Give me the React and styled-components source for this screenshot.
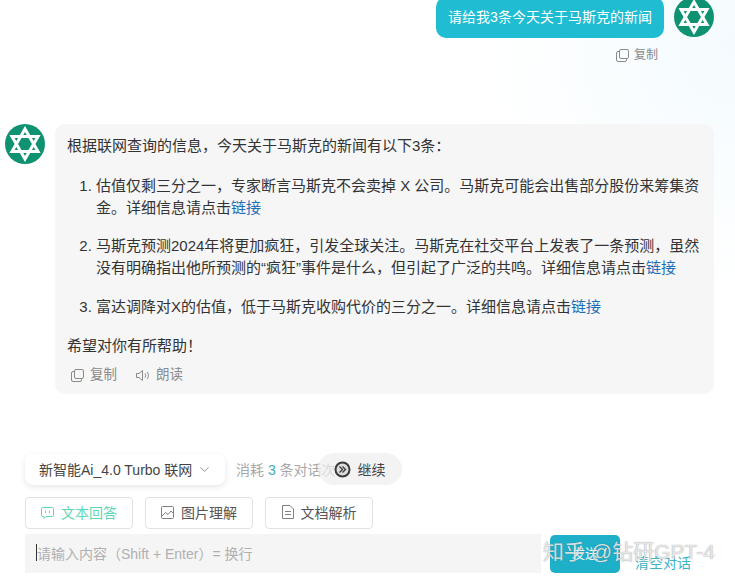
import React from "react";
import styled, { createGlobalStyle } from "styled-components";
import { ChevronDown } from "lucide-react";

const GlobalStyle = createGlobalStyle`
	html, body {
		margin: 0;
		padding: 0;
		background: #ffffff;
	}
	body {
		font-family: "Liberation Sans", "Noto Sans CJK SC", sans-serif;
		color: #333333;
	}
	* {
		box-sizing: border-box;
	}
`;

const Page = styled.div`
	position: relative;
	width: 735px;
	height: 583px;
	overflow: hidden;
	background: radial-gradient(circle at 100% 8%, #f4fbfe 0, #ffffff 260px);
`;

const Chat = styled.div`
	height: 449px;
	margin-top: -3px;
	display: flex;
	flex-direction: column;
`;

const UserRow = styled.div`
	display: flex;
	justify-content: flex-end;
	gap: 10px;
	padding-right: 21px;
`;

const UserBubble = styled.div`
	width: 228px;
	height: 41px;
	background: #1fbcd2;
	border-radius: 10px;
	color: #ffffff;
	font-size: 14px;
	line-height: 41px;
	text-align: center;
`;

const UserCopy = styled.div`
	display: flex;
	justify-content: flex-end;
	padding: 8px 77px 0 0;
`;

const AssistantRow = styled.div`
	display: flex;
	gap: 10px;
	margin-top: 60px;
	padding: 0 21px 0 5px;
`;

const AssistantBubble = styled.div`
	width: 659px;
	height: 270px;
	padding: 11px 12px 10px;
	background: #f6f6f7;
	border-radius: 10px;
	font-size: 15px;
	line-height: 22px;
`;

const Paragraph = styled.p`
	margin: 0;
`;

const NewsList = styled.ol`
	margin: 18px 0 17px;
	padding: 0 0 0 29px;
`;

const NewsItem = styled.li`
	margin-bottom: 17px;
	&:first-child {
		margin-bottom: 16px;
	}
	&:last-child {
		margin-bottom: 0;
	}
`;

const NewsLink = styled.a`
	color: #1c6fb5;
`;

const Actions = styled.div`
	display: flex;
	gap: 19px;
	margin-top: 9px;
	padding-left: 4px;
`;

const Action = styled.span`
	display: inline-flex;
	align-items: center;
	gap: ${({ $small }) => ($small ? "5px" : "6px")};
	font-size: ${({ $small }) => ($small ? "12px" : "13.5px")};
	line-height: 18px;
	color: #8a8a8a;
`;

const Composer = styled.div`
	padding-left: 25px;
`;

const ModelRow = styled.div`
	display: flex;
	align-items: center;
	height: 32px;
	margin-top: 7px;
`;

const ModelSelect = styled.div`
	display: flex;
	align-items: center;
	justify-content: space-between;
	width: 200px;
	height: 31px;
	padding: 0 13px 0 14px;
	background: #ffffff;
	border-radius: 8px;
	box-shadow: 0 2px 6px rgba(0, 0, 0, 0.1);
	font-size: 14px;
	color: #444444;
	white-space: nowrap;
`;

const Usage = styled.span`
	position: relative;
	z-index: 1;
	margin-left: 11px;
	font-size: 14px;
	color: #a8a8a8;
	white-space: nowrap;
`;

const UsageCount = styled.b`
	font-weight: 400;
	color: #3fa9bd;
`;

const ContinuePill = styled.div`
	position: relative;
	z-index: 2;
	display: flex;
	align-items: center;
	gap: 7px;
	width: 84px;
	height: 32px;
	margin-left: -18px;
	padding-left: 16px;
	border-radius: 16px;
	background: rgba(238, 238, 240, 0.7);
	font-size: 14px;
	color: #444444;
`;

const ContinueIcon = styled.svg`
	width: 17px;
	height: 17px;
	flex: none;
`;

const ModeRow = styled.div`
	display: flex;
	gap: 12px;
	margin-top: 12px;
`;

const ModeButton = styled.div`
	display: flex;
	align-items: center;
	justify-content: center;
	gap: 7px;
	width: 108px;
	height: 32px;
	padding-bottom: 2px;
	border: 1px solid #e2e2e2;
	border-radius: 4px;
	background: #ffffff;
	font-size: 14px;
	color: ${({ $active }) => ($active ? "#5fd6b4" : "#555555")};
	svg {
		color: ${({ $active }) => ($active ? "#5fd6b4" : "#808080")};
	}
`;

const InputRow = styled.div`
	display: flex;
	align-items: center;
	gap: 9px;
	margin-top: 5px;
`;

const Input = styled.div`
	display: flex;
	align-items: center;
	width: 516px;
	height: 39px;
	padding: 0 0 2px 11px;
	background: #f5f5f5;
	font-size: 14px;
	color: #b0b0b0;
`;

const Caret = styled.span`
	width: 1px;
	height: 17px;
	background: #333333;
`;

const SendButton = styled.div`
	width: 70px;
	height: 38px;
	border-radius: 5px;
	background: #1fb0c9;
	color: #ffffff;
	font-size: 13px;
	line-height: 38px;
	text-align: center;
`;

const ClearLink = styled.span`
	align-self: flex-end;
	margin: 0 0 1px 6px;
	font-size: 14px;
	line-height: 18px;
	color: #3fb3c6;
`;

const Watermark = styled.div`
	position: absolute;
	left: 543px;
	top: 537px;
	font-size: 21px;
	line-height: 30px;
	color: rgba(255, 255, 255, 0.8);
	text-shadow: 0 0 1px rgba(70, 70, 70, 0.7);
	white-space: nowrap;
`;

const StarAvatar = () => (
	<svg width="40" height="40" viewBox="0 0 40 40" style={{ flex: "none" }}>
		<circle cx="20" cy="20" r="20" fill="#0f9272" />
		<g fill="none" stroke="#ffffff" strokeWidth="3">
			<polygon points="20,5 33,27.5 7,27.5" />
			<polygon points="20,35 33,12.5 7,12.5" />
		</g>
	</svg>
);

const CopyIcon = () => (
	<svg width="13" height="13" viewBox="0 0 13 13" fill="none" stroke="#8a8a8a" strokeWidth="1">
		<rect x="3.5" y="0.5" width="9" height="9" rx="1.5" />
		<path d="M3.5 2.5H2A1.5 1.5 0 0 0 .5 4v7A1.5 1.5 0 0 0 2 12.5h7A1.5 1.5 0 0 0 10.5 11V9.5" />
	</svg>
);

const SpeakerIcon = () => (
	<svg width="14" height="13" viewBox="0 0 14 13" fill="none" stroke="#8a8a8a" strokeWidth="1">
		<path d="M.5 4.5h2.5L6.5 1.5v10L3 8.5H.5z" />
		<path d="M9 4.5a3 3 0 0 1 0 4M11 3a5 5 0 0 1 0 7" />
	</svg>
);

const MessageIcon = () => (
	<svg width="13" height="13" viewBox="0 0 13 13" fill="none" stroke="currentColor" strokeWidth="1">
		<path d="M1.5 1.5h10a1 1 0 0 1 1 1v7a1 1 0 0 1-1 1H5l-2 2v-2H1.5a1 1 0 0 1-1-1v-7a1 1 0 0 1 1-1z" />
		<path d="M4.5 4.5v2.5M8.5 4.5v2.5" />
	</svg>
);

const PictureIcon = () => (
	<svg width="13" height="13" viewBox="0 0 13 13" fill="none" stroke="currentColor" strokeWidth="1">
		<rect x="0.5" y="0.5" width="12" height="12" rx="1" />
		<path d="M1 10l3.5-3.5 2.5 2 3-3.5 2 2" />
	</svg>
);

const DocumentIcon = () => (
	<svg width="12" height="14" viewBox="0 0 12 14" fill="none" stroke="currentColor" strokeWidth="1">
		<path d="M.5 .5h7.5l3.5 3.5v9.5H.5z" />
		<path d="M3 6.5h6M3 9.5h6" />
	</svg>
);

const news = [
	"估值仅剩三分之一，专家断言马斯克不会卖掉 X 公司。马斯克可能会出售部分股份来筹集资金。详细信息请点击",
	"马斯克预测2024年将更加疯狂，引发全球关注。马斯克在社交平台上发表了一条预测，虽然没有明确指出他所预测的“疯狂”事件是什么，但引起了广泛的共鸣。详细信息请点击",
	"富达调降对X的估值，低于马斯克收购代价的三分之一。详细信息请点击",
];

const App = () => {
	return (
		<Page>
			<GlobalStyle />
			<Chat>
				<UserRow>
					<UserBubble>请给我3条今天关于马斯克的新闻</UserBubble>
					<StarAvatar />
				</UserRow>
				<UserCopy>
					<Action $small>
						<CopyIcon />
						复制
					</Action>
				</UserCopy>
				<AssistantRow>
					<StarAvatar />
					<AssistantBubble>
						<Paragraph>根据联网查询的信息，今天关于马斯克的新闻有以下3条：</Paragraph>
						<NewsList>
							{news.map((text) => (
								<NewsItem key={text}>
									{text}
									<NewsLink>链接</NewsLink>
								</NewsItem>
							))}
						</NewsList>
						<Paragraph>希望对你有所帮助！</Paragraph>
						<Actions>
							<Action>
								<CopyIcon />
								复制
							</Action>
							<Action>
								<SpeakerIcon />
								朗读
							</Action>
						</Actions>
					</AssistantBubble>
				</AssistantRow>
			</Chat>
			<Composer>
				<ModelRow>
					<ModelSelect>
						新智能Ai_4.0 Turbo 联网
						<ChevronDown size={15} strokeWidth={1.3} color="#777777" />
					</ModelSelect>
					<Usage>
						消耗 <UsageCount>3</UsageCount> 条对话次
					</Usage>
					<ContinuePill>
						<ContinueIcon viewBox="0 0 17 17">
							<circle cx="8.5" cy="8.5" r="7" fill="#dddddd" stroke="#3a3a3a" strokeWidth="2" />
							<path d="M5.5 5.5l3 3-3 3M8.5 5.5l3 3-3 3" fill="none" stroke="#3a3a3a" strokeWidth="1.3" />
						</ContinueIcon>
						继续
					</ContinuePill>
				</ModelRow>
				<ModeRow>
					<ModeButton $active>
						<MessageIcon />
						文本回答
					</ModeButton>
					<ModeButton>
						<PictureIcon />
						图片理解
					</ModeButton>
					<ModeButton>
						<DocumentIcon />
						文档解析
					</ModeButton>
				</ModeRow>
				<InputRow>
					<Input>
						<Caret />
						请输入内容（Shift + Enter）= 换行
					</Input>
					<SendButton>发送</SendButton>
					<ClearLink>清空对话</ClearLink>
				</InputRow>
			</Composer>
			<Watermark>知乎 @钻研GPT-4</Watermark>
		</Page>
	);
};

export default App;
